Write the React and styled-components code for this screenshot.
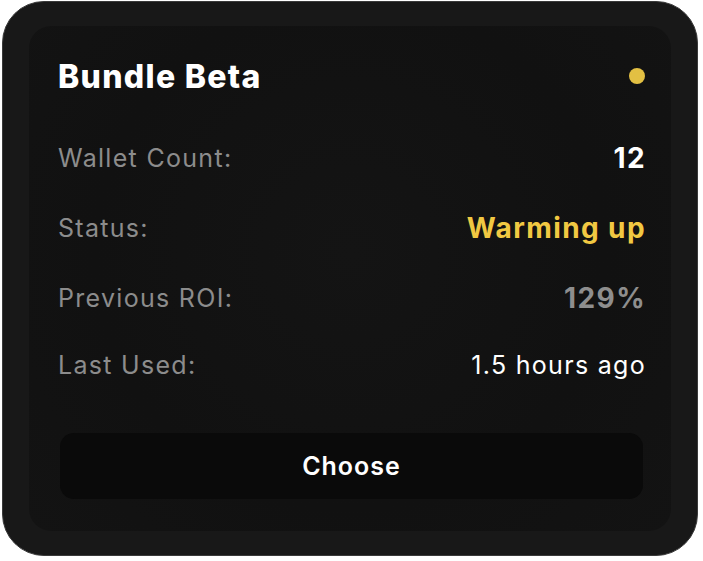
import React from "react";
import styled, { createGlobalStyle } from "styled-components";

const GlobalStyle = createGlobalStyle`
  * { box-sizing: border-box; }
  body {
    margin: 0;
    background: #ffffff;
    font-family: Inter, "Noto Sans", sans-serif;
  }
`;

const rows = [
  { label: "Wallet Count:", value: "12", tone: "strong" },
  { label: "Status:", value: "Warming up", tone: "warn" },
  { label: "Previous ROI:", value: "129%", tone: "muted" },
  { label: "Last Used:", value: "1.5 hours ago", tone: "plain" },
];

const App = () => {
  return (
    <>
      <GlobalStyle />
      <Page>
        <Card>
          <Panel>
            <Header>
              <Title>Bundle Beta</Title>
              <Dot />
            </Header>
            <RowList>
              {rows.map((row) => (
                <Row key={row.label}>
                  <Label>{row.label}</Label>
                  <Value $tone={row.tone}>{row.value}</Value>
                </Row>
              ))}
            </RowList>
            <ChooseButton type="button">Choose</ChooseButton>
          </Panel>
        </Card>
      </Page>
    </>
  );
};

export default App;

// styled-components
const Page = styled.div`
  padding: 1px 0 0 2px;
`;
const Card = styled.div`
  width: 696px;
  height: 555px;
  padding: 24px 26px;
  background: #181818;
  border: 1px solid #3a3a3a;
  border-radius: 42px;
`;
const Panel = styled.div`
  height: 100%;
  padding: 32px 26px 32px 29px;
  border-radius: 22px;
  background: radial-gradient(circle at 50% 45%, #141414 0%, #111111 60%, #131313 100%);
  display: flex;
  flex-direction: column;
`;
const Header = styled.div`
  height: 36px;
  display: flex;
  align-items: center;
  justify-content: space-between;
`;
const Title = styled.h2`
  margin: 0;
  font-size: 32px;
  font-weight: 800;
  color: #ffffff;
  letter-spacing: 1.3px;
`;
const Dot = styled.span`
  width: 16px;
  height: 16px;
  border-radius: 50%;
  background: #e3c043;
`;
const RowList = styled.div`
  margin-top: 46px;
  display: flex;
  flex-direction: column;
  gap: 34px;
`;
const Row = styled.div`
  height: 36px;
  display: flex;
  align-items: center;
  justify-content: space-between;

  &:last-child {
    margin-top: -3px;
  }
`;
const Label = styled.span`
  font-size: 25px;
  letter-spacing: 1.3px;
  color: #8c8c8c;
`;
const toneColor = {
  strong: "#ffffff",
  warn: "#f1c842",
  muted: "#8e8e8e",
  plain: "#ffffff",
};
const Value = styled.span`
  font-size: ${(p) => (p.$tone === "plain" ? "25px" : "28px")};
  font-weight: ${(p) => (p.$tone === "plain" ? 400 : 700)};
  letter-spacing: ${(p) => (p.$tone === "plain" ? "1.3px" : "1.4px")};
  margin-right: -1px;
  color: ${(p) => toneColor[p.$tone]};
`;
const ChooseButton = styled.button`
  margin: 50px 2px 0;
  height: 66px;
  border: none;
  border-radius: 14px;
  background: #0a0a0a;
  color: #ffffff;
  font-family: inherit;
  font-size: 25px;
  font-weight: 600;
  letter-spacing: 1px;
  cursor: pointer;
`;
